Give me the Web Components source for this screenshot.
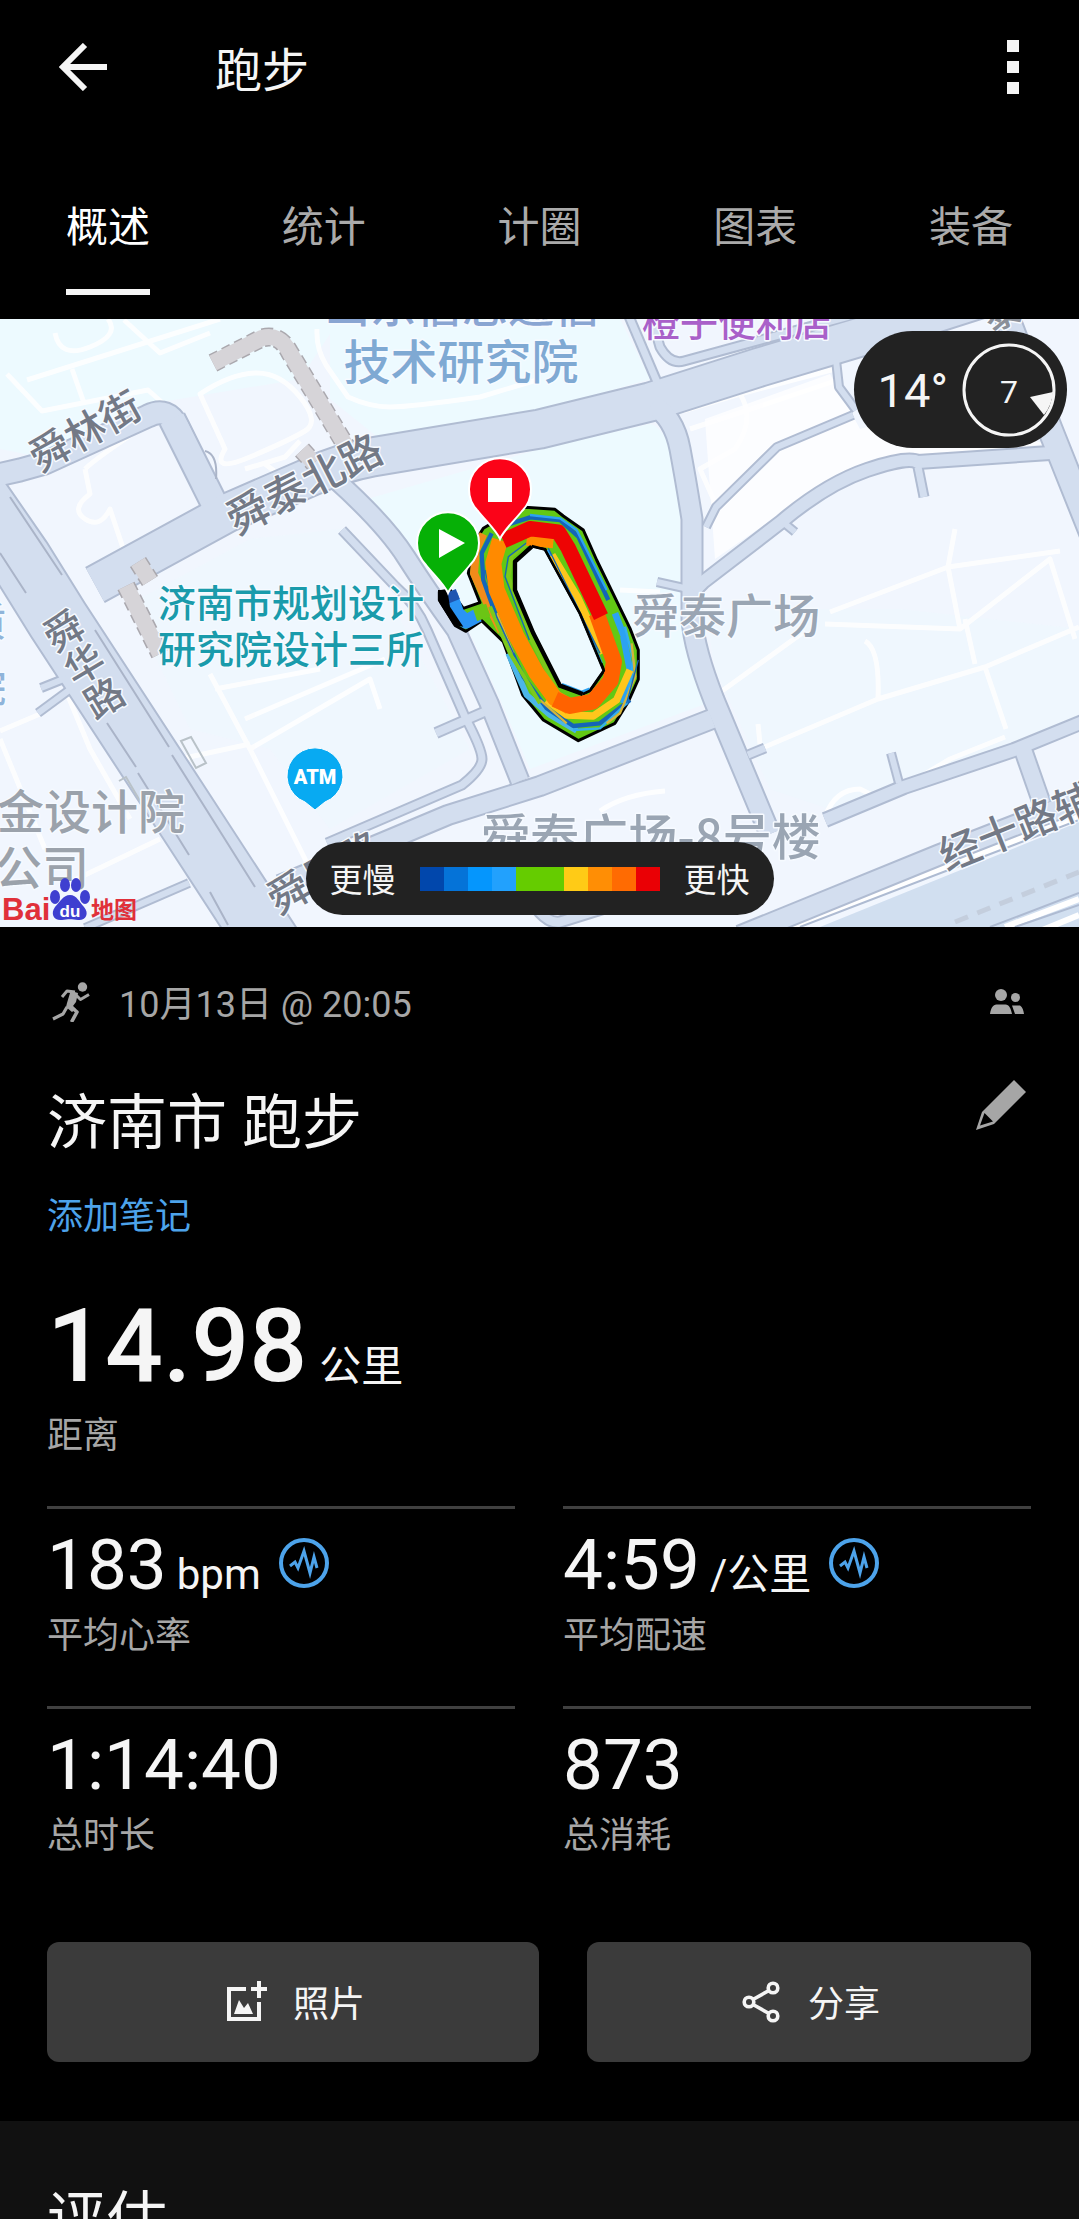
<!DOCTYPE html>
<html lang="zh-CN">
<head>
<meta charset="utf-8">
<meta name="viewport" content="width=device-width, initial-scale=1">
<title>跑步</title>
<style>
  html, body { margin: 0; height: 100%; background: #000; }
  body { font-family: Roboto, "Noto Sans CJK SC", sans-serif; color: #f5f5f5; overflow: hidden; }
</style>
</head>
<body>
<activity-page>
  <app-bar slot="bar">跑步</app-bar>
  <tab-bar slot="tabs">
    <tab-item active>概述</tab-item>
    <tab-item>统计</tab-item>
    <tab-item>计圈</tab-item>
    <tab-item>图表</tab-item>
    <tab-item>装备</tab-item>
  </tab-bar>
  <route-map slot="map">
    <weather-pill slot="top" wind="7">14°</weather-pill>
    <pace-legend slot="bottom"><span slot="slow">更慢</span><span slot="fast">更快</span></pace-legend>
  </route-map>
  <activity-summary slot="body">
    <span slot="date">10月13日 @ 20:05</span>
    <span slot="title">济南市 跑步</span>
    <span slot="note">添加笔记</span>
    <stat-cell slot="hero" large unit="公里" label="距离">14.98</stat-cell>
    <stat-cell unit="bpm" label="平均心率" chart>183</stat-cell>
    <stat-cell unit="/公里" label="平均配速" chart>4:59</stat-cell>
    <stat-cell label="总时长">1:14:40</stat-cell>
    <stat-cell label="总消耗">873</stat-cell>
    <action-button slot="photo" icon="photo">照片</action-button>
    <action-button slot="share" icon="share">分享</action-button>
  </activity-summary>
  <review-section slot="review">评估</review-section>
</activity-page>

<script>
const define = (name, render) => customElements.define(name, class extends HTMLElement {
  connectedCallback() {
    if (this.shadowRoot) return;
    this.attachShadow({ mode: 'open' }).innerHTML = render(this);
  }
});

const ICONS = {
  back: `<svg width="48" height="48" viewBox="0 0 48 48" fill="none" stroke="currentColor" stroke-width="6"><path d="M26 2 4 24l22 22M4 24h44"/></svg>`,
  more: `<svg width="12" height="54" viewBox="0 0 12 54" fill="currentColor"><path d="M0 0h12v12H0zM0 21h12v12H0zM0 42h12v12H0z"/></svg>`,
  run: `<svg width="40" height="40" viewBox="0 0 40 40" fill="none" stroke="currentColor" stroke-linejoin="round"><circle cx="30.500" cy="5" r="4.700" fill="currentColor" stroke="none"/><path fill="currentColor" stroke="none" d="M16 8l10 3-2 9-3 4 3 3-4 3-6-5 1-4 3-10z"/><path stroke-width="3" d="M23 10 15 9l-5 6M23 12l5.500 5.500L37 12.500"/><path stroke-width="3.600" d="M18 24l7 6-5.500 10"/><path stroke-width="3.200" d="M15 25l-4 7-10 5"/></svg>`,
  people: `<svg width="48" height="48" viewBox="0 0 48 48" fill="currentColor"><circle cx="18" cy="17" r="6"/><circle cx="32.500" cy="19.500" r="4.500"/><path d="M7 36c1-6 3-9.500 6.500-9.500h9c3.500 0 5.500 4 6.500 9.500zM29 27.500h8c2.500 1.500 3.500 5 4 8.500h-9z"/></svg>`,
  edit: `<svg width="60" height="60" viewBox="0 0 60 60"><path fill="currentColor" d="M43 5l12 12-32 32L5 55l6-18z"/><path fill="#000" d="M13.500 38l8.500 8.500-13 4z"/></svg>`,
  wave: `<svg width="50" height="50" viewBox="0 0 50 50" fill="none" stroke="#4da3ea" stroke-width="4"><circle cx="25" cy="25" r="23"/><path stroke-width="3" d="M11 28l5-4 3 6 6-17 6 22 4-16 3 11"/></svg>`,
  photo: `<svg width="42" height="42" viewBox="0 0 42 42" fill="none" stroke="currentColor" stroke-width="4"><path d="M21 8H4v30h30V21M34 0v17M26 8h16"/><path fill="currentColor" stroke="none" d="M9 33l5-14 5 8 4-5 5 11z"/></svg>`,
  share: `<svg width="40" height="42" viewBox="0 0 40 42" fill="none" stroke="currentColor" stroke-width="3.600"><circle cx="7" cy="21" r="4.800"/><circle cx="31" cy="7" r="4.800"/><circle cx="31" cy="35" r="4.800"/><path d="M11 18.500 27 9.500M11 23.500l16 9"/></svg>`
};

define('activity-page', () => `
<style>
  :host { display: flex; flex-direction: column; height: 100vh; overflow: hidden; }
  ::slotted(*) { flex: none; }
  ::slotted([slot="review"]) { flex: 1 1 0; }
</style>
<slot name="bar"></slot><slot name="tabs"></slot>
<slot name="map"></slot><slot name="body"></slot><slot name="review"></slot>`);

define('app-bar', () => `
<style>
  :host { display: block; }
  header { display: flex; align-items: center; height: 134px; padding: 0 60px 0 59px; }
  button { display: flex; border: 0; padding: 0; background: none; color: inherit; }
  h1 { flex: 1; margin: 0 0 0 108px; padding-top: 8px; font-size: 47px; line-height: 60px; font-weight: 400; }
</style>
<header>
  <button aria-label="返回">${ICONS.back}</button>
  <h1><slot></slot></h1>
  <button aria-label="更多">${ICONS.more}</button>
</header>`);

define('tab-bar', () => `
<style>
  :host { display: block; }
  nav { display: flex; }
  ::slotted(*) { flex: 1 1 0; }
</style>
<nav><slot></slot></nav>`);

define('tab-item', el => `
<style>
  :host { display: flex; justify-content: center; padding: 64px 0 24px; }
  a { font-size: 42px; line-height: 60px; padding-bottom: 31px; border-bottom: 6px solid transparent; color: #aaa; text-decoration: none; }
  :host([active]) a { color: #fff; border-color: #f5f5f5; }
</style>
<a href="#"${el.hasAttribute('active') ? ' aria-current="page"' : ''}><slot></slot></a>`);

/* Streets of the base map: [width, path] */
const STREETS = [
  [62, 'M-70 110 20 240 58 301 175 480 270 626'],
  [22, 'M-20 160 20 151 45 144 148 97Q168 87 178 108L222 200'],
  [26, 'M172 100 222 200'],
  [38, 'M95 266 227 194 310 158 Q340 144 372 138L540 110 650 83 760 48 867 16 980-20'],
  [18, 'M335 160 Q385 205 406 238T456 311L489 384 520 462'],
  [8, 'M342 211 396 268Q416 285 427 311L465 398Q482 430 482 440T462 466L327 524'],
  [9, 'M436 414 484 393'],
  [19, 'M280 566 386 522 448 496 540 467 712 400'],
  [20, 'M652 85 Q674 98 680 130T692 200V300Q694 330 714 381L770 515'],
  [13, 'M694 272 703 263 781 203 Q826 165 867 151T918 143L1050 134'],
  [24, 'M1000-20 1050 110 Q1066 150 1092 215'],
  [7, 'M706 208 716 188 777 128 853 96'],
  [7, 'M836 41 839 68 856 91'],
  [8, 'M628-5 657 63'],
  [8, 'M652 0 660 28Q670 46 684 42L849-3'],
  [20, 'M740 617 939 536 1021 504 1085 480'],
  [13, 'M825 501 904 468 1014 431 1085 402'],
  [17, 'M1021 425 1042 485'],
  [7, 'M891 434 899 464'],
  [8, 'M918 148 924 178'],
  [7, 'M784 204 795 213'],
  [8, 'M748 436 765 429'],
  [7, 'M657 263 684 269'],
  [7, 'M38 394 72 369'],
  [7, 'M41 369 66 359'],
  [7, 'M85 609 189 564'],
  [10, 'M520 560Q540 606 560 603L640 578']
];
const LANES = [
  'M7 55 42 92 148 71 165 86M27 61 220 0M124 1 160 34 210 14M72 50 84 84M55 14Q60 40 90 28T108 0',
  'M200 75Q230 55 255 54T300 78T305 112T250 138T225 130Z',
  'M317 10Q316 30 326 46L348 78Q370 88 390 88T480 78L540 60',
  'M245 150 285 138 300 122M265 145 285 160',
  'M85 150Q95 140 140 110M85 150 90 175Q70 190 85 200T110 190L125 235',
  'M0 412 40 395 66 372M0 420 45 530M66 372 90 430 130 500M60 568 160 520',
  'M210 355 250 430 320 570M180 440 250 425M250 430 370 360 380 390M215 370 320 350M245 400 385 340',
  'M683 92 740 75 835 50M690 110 745 92 835 62M740 75Q756 100 735 130L700 150 716 186',
  'M830 293 948 248 1060 232M948 248 955 210M948 248 960 310 825 305M960 310 1050 240 1075 320',
  'M722 372 805 312M760 430 878 380 985 348 1079 308M878 380Q880 330 865 322M985 348 1006 410M760 425 758 405M965 300 975 345',
  'M600 492Q625 475 665 472M825 498Q835 470 860 470L880 480M925 455 950 440 1005 418M620 271 660 273'
];
const NAMES = [
  /* x, y, size, colour, text, rotation */
  [461, 39, 47, '#7fa9d3', '技术研究院'],
  [462, -17, 46, '#89a5d2', '山东信息通信'],
  [737, 0, 38, '#a960c9', '橙子便利店'],
  [84, 110, 40, '#737986', '舜林街', -29],
  [303, 162, 42, '#737986', '舜泰北路', -27],
  [291, 281, 38, '#1a9bab', '济南市规划设计'],
  [291, 327, 38, '#1a9bab', '研究院设计三所'],
  [726, 293, 47, '#9aa5b3', '舜泰广场'],
  [651, 514, 49, '#9aa5b3', '舜泰广场-8号楼'],
  [91, 489, 47, '#9ba2ab', '金设计院'],
  [42, 545, 47, '#9ba2ab', '公司'],
  [1016, 505, 41, '#737986', '经十路辅', -22],
  [323, 551, 41, '#737986', '舜风路', -29],
  [1002, -10, 40, '#8b9099', '泰', -20],
  [-14, 300, 40, '#8fb4da', '质'],
  [-14, 366, 40, '#8fb4da', '院']
];

define('route-map', () => `
<style>
  :host { display: grid; height: 608px; background: #f1f6fe; overflow: hidden; }
  :host > * { grid-area: 1 / 1; min-width: 0; min-height: 0; }
  .base { width: 100%; height: 608px; }
  .names text { text-anchor: middle; dominant-baseline: central; paint-order: stroke; stroke: #f6faff; stroke-width: 3px; stroke-linejoin: round; font-family: "Noto Sans CJK SC", sans-serif; font-weight: 500; }
  .top, .bottom { display: flex; padding: 12px; z-index: 1; }
  .top { justify-content: flex-end; align-self: start; }
  .bottom { justify-content: center; align-self: end; }
</style>
<svg class="base" viewBox="0 0 1079 608" preserveAspectRatio="xMidYMid slice" role="img" aria-label="路线地图">
  <g fill="#edfaff">
    <path d="M0 0H340L300 60 150 85 50 140 0 130zM330 0H620L650 60 540 92 380 120 330 80z"/>
    <path d="M350 185 540 130 650 105Q672 110 680 180V300L705 385 530 450 500 380 450 270z"/>
    <path d="M130 285 250 220 340 210 400 300 470 430 330 510 270 430 190 410z" opacity=".4"/>
    <path d="M705 290H900L1079 310V400L830 490 770 470 715 350z" opacity=".4"/>
  </g>
  <path fill="#fcfdff" d="M705 100 830 55 860 110 930 90 1045 125 880 145 780 195 715 240z"/>
  <path fill="#d1dff0" d="M820 608 1079 503V608z"/>
  <g fill="none" stroke="#fff" stroke-width="6"><path d="M790 608 1079 497M1005 608 1079 580M1040 612 1079 596"/></g>
  <g fill="none" stroke="#aebbd2" stroke-width="2"><path d="M800 608 1079 501M990 608 1079 574M1015 608 1079 586"/></g>
  <path fill="none" stroke="#c4cedd" stroke-width="5" stroke-dasharray="14 10" d="M955 603 1079 553"/>
  <g fill="none" stroke="#fff" stroke-width="5" stroke-linejoin="round" opacity=".85">${LANES.map(d => `<path d="${d}"/>`).join('')}</g>
  <g fill="none" stroke="#b0bcd2" stroke-linejoin="round">${STREETS.map(([w, d]) => `<path stroke-width="${w + 3}" d="${d}"/>`).join('')}</g>
  <g fill="none" stroke="#d3deef" stroke-linejoin="round">${STREETS.map(([w, d]) => `<path stroke-width="${w - 1}" d="${d}"/>`).join('')}</g>
  <g fill="none" stroke="#aab4c8" stroke-width="2"><path d="M95 311 169 428M107 404 136 448M138 454 189 536M172 436 255 568M10 178 62 256M0 234 26 274M210 573 228 606M205 132Q218 135 216 160"/></g>
  <g fill="none" stroke-linejoin="round">
    <g stroke="#aaa8ae" stroke-width="19" stroke-dasharray="9 5"><path d="M213 44 262 19Q280 14 290 34L346 127M138 243 150 262M126 267 160 335M302 131 314 144"/></g>
    <g stroke="#d6d4d8" stroke-width="16"><path d="M213 44 262 19Q280 14 290 34L346 127M138 243 150 262M126 267 160 335M302 131 314 144"/></g>
  </g>
  <g fill="none" stroke="#b9c2c8" stroke-width="2"><path d="M181 422l10-4 15 26-10 5zM119 462l7-4 14 24"/></g>

  <g class="names">
    ${NAMES.map(([x, y, s, c, t, r]) => `<text x="${x}" y="${y}" font-size="${s}" fill="${c}"${r ? ` transform="rotate(${r} ${x} ${y})"` : ''}>${t}</text>`).join('')}
    <text x="84" y="345" font-size="39" fill="#737986" writing-mode="vertical-rl" transform="rotate(-31 84 345)">舜华路</text>
  </g>

  <path fill="#08aaf2" stroke="#fff" stroke-width="1" d="M315 491l-10-8a28 28 0 1 1 20 0z"/>
  <text x="315" y="465" font-size="20" font-weight="900" font-family="Roboto, sans-serif" fill="#fff" text-anchor="middle">ATM</text>

  <g transform="translate(400 121) scale(.3333)" fill="none" stroke-linejoin="round">
    <path fill="#62c814" stroke="#000" stroke-width="9" fill-rule="evenodd" d="M375 202 465 208 490 228 550 270 590 360 690 565 715 630V718L685 785 645 850 535 902 430 840 368 765 330 660 310 605 245 542 198 574 165 556 118 480 118 455 150 450 190 505 240 488 205 400 222 310 250 265 310 230zM345 365V450L400 580 480 737 548 762 570 752 612 692 540 520 435 328 395 318z"/>
    <path stroke="#4bb5e8" stroke-width="18" d="M325 640 380 765 450 825 530 872"/>
    <path stroke="#f28b1a" stroke-width="24" d="M250 282 228 330 222 400 262 490 305 575"/>
    <path stroke="#1465b8" stroke-width="13" d="M275 280 245 340 250 420 300 560 370 710 440 805 520 858 600 850 690 780M320 255 390 232 480 240 535 290 625 480"/>
    <path stroke="#2ca2f2" stroke-width="20" d="M645 520 680 610M670 590 692 700 670 790"/>
    <path stroke="#2ca2f2" stroke-width="12" d="M485 735 545 758 570 748"/>
    <path stroke="#2ca2f2" stroke-width="7" d="M390 225 480 235 530 270 620 450M443 330 520 470 605 670"/>
    <path stroke="#34aef0" stroke-width="7" d="M675 560 700 660 680 790 600 865 520 870"/>
    <path stroke="#ffc61c" stroke-width="22" d="M456 345 532 470 610 640M690 690 650 780 580 828 500 825 440 780"/>
    <path stroke="#d4b43c" stroke-width="7" d="M695 610 706 710 660 820 620 850M290 520 340 640M420 780 500 850"/>
    <path stroke="#7cc91c" stroke-width="12" d="M390 305 335 348 325 410 395 600 465 740M270 500 330 640 420 790"/>
    <path stroke="#1465b8" stroke-width="4" d="M380 308 325 350 315 410 388 600M255 390 290 530 345 650M715 660 680 790M445 325 600 640"/>
    <path stroke="#ff8a00" stroke-width="34" d="M460 308 380 300"/>
    <path stroke="#ff8a00" stroke-width="48" d="M300 300 280 370 290 450 350 590 410 700 465 775 510 800"/>
    <path stroke="#ff6200" stroke-width="48" d="M465 778 510 798 578 785 632 722 642 665 590 520"/>
    <path stroke="#ee0404" stroke-width="46" d="M310 302 390 266 475 276 505 325 603 530"/>
    <path stroke="#2a94f4" stroke-width="42" d="M152 465 172 520 198 545 235 525"/>
    <path stroke="#1f55b0" stroke-width="42" d="M148 455 160 485"/>
    <path stroke="#6bc515" stroke-width="40" d="M225 524 265 510"/>
    <path stroke="#000" stroke-width="13" d="M395 320 345 365V450L400 580 480 737 548 762"/>
    <path stroke="#000" stroke-width="7" d="M548 762 570 752 612 692 540 520 435 328 395 318"/>
    <path fill="#000" d="M114 450 142 450 150 500 190 560 160 555 116 485z"/>
  </g>

  <g stroke="#fff" stroke-width="2">
    <path fill="#fb0318" d="M500 220c-3-8-15-19-22-28a31 31 0 1 1 44 0c-7 9-19 20-22 28z"/>
    <path fill="#06b006" d="M448 274c-3-8-15-19-22-28a31 31 0 1 1 44 0c-7 9-19 20-22 28z"/>
  </g>
  <path fill="#fff" d="M488 159h24v24h-24zM439 210v29l26-15z"/>

  <g font-family="Liberation Sans, Noto Sans CJK SC, sans-serif" font-weight="700">
    <text x="2" y="601" font-size="31" fill="#e0303a">Bai</text>
    <text x="91" y="599" font-size="23" fill="#e0303a">地图</text>
    <g fill="#3e3fd0"><ellipse cx="55" cy="578" rx="5" ry="7"/><ellipse cx="65" cy="566" rx="5" ry="7"/><ellipse cx="76" cy="566" rx="5" ry="7"/><ellipse cx="85" cy="578" rx="5" ry="7"/><path d="M70 576c7 0 9 7 14 12 6 7 1 14-6 13-6-1-10-1-16 0-8 1-12-6-7-13 5-5 8-12 15-12z"/></g>
    <text x="70" y="598" font-size="17" fill="#fff" text-anchor="middle">du</text>
  </g>
</svg>
<div class="top"><slot name="top"></slot></div>
<div class="bottom"><slot name="bottom"></slot></div>`);

define('weather-pill', el => `
<style>
  :host { display: flex; align-items: center; gap: 14px; height: 117px; padding: 0 11px 0 24px; border-radius: 59px; background: #222; }
  .temp { font-size: 47px; padding-top: 2px; }
  .wind { display: grid; place-items: center; }
  .wind > * { grid-area: 1 / 1; }
  .speed { font-size: 32px; padding-top: 4px; }
</style>
<span class="temp"><slot></slot></span>
<span class="wind">
  <svg width="94" height="94" viewBox="0 0 94 94"><circle cx="47" cy="47" r="45" fill="none" stroke="#f5f5f5" stroke-width="3"/><path fill="#f5f5f5" d="M68 54l23-5q-1 13-9 23z"/></svg>
  <span class="speed">${el.getAttribute('wind')}</span>
</span>`);

define('pace-legend', () => `
<style>
  :host { display: flex; align-items: center; gap: 24px; height: 73px; padding: 0 24px; border-radius: 37px; background: #222; font-size: 33px; line-height: 48px; }
  ::slotted(span) { padding-top: 5px; }
  .scale { display: flex; }
  i { width: 24px; height: 24px; }
</style>
<slot name="slow"></slot>
<span class="scale">${['#0147ac', '#0573d8', '#0596fd', '#22a1fd', '#65cc00', '#65cc00', '#ffcb16', '#ff8e05', '#ff6b02', '#ea0005'].map(c => `<i style="background:${c}"></i>`).join('')}</span>
<slot name="fast"></slot>`);

define('activity-summary', () => `
<style>
  :host { display: block; padding: 48px 48px 59px 47px; }
  .row { display: flex; align-items: center; }
  .meta { height: 54px; color: #a6a6a6; font-size: 36px; line-height: 48px; }
  .meta .date { flex: 1; margin-left: 27px; padding-top: 5px; }
  .run { display: flex; width: 40px; padding-left: 5px; }
  .heading { margin-top: 46px; height: 98px; }
  h2 { flex: 1; margin: 0; font-size: 60px; line-height: 84px; font-weight: 400; }
  button { display: flex; align-self: flex-start; border: 0; padding: 0; background: none; color: #a6a6a6; }
  .meta button { align-self: center; }
  a { display: block; width: max-content; margin: 20px 0 49px; font-size: 36px; line-height: 48px; color: #4da3ea; text-decoration: none; }
  .grid { display: grid; grid-template-columns: 1fr 1fr; column-gap: 48px; margin: 46px 0 36px; }
  .actions { display: grid; grid-template-columns: 492fr 444fr; gap: 48px; }
</style>
<div class="row meta"><span class="run">${ICONS.run}</span><span class="date"><slot name="date"></slot></span><button aria-label="隐私">${ICONS.people}</button></div>
<div class="row heading"><h2><slot name="title"></slot></h2><button aria-label="编辑">${ICONS.edit}</button></div>
<a href="#"><slot name="note"></slot></a>
<slot name="hero"></slot>
<div class="grid"><slot></slot></div>
<div class="actions"><slot name="photo"></slot><slot name="share"></slot></div>`);

define('stat-cell', el => `
<style>
  :host { display: block; border-top: 3px solid #404040; padding: 14px 0 46px; }
  :host([large]) { border: 0; padding: 0; }
  .value { display: flex; align-items: baseline; gap: 10px; height: 84px; font-size: 71px; line-height: 84px; }
  :host([large]) .value { gap: 12px; height: 112px; font-size: 102px; line-height: 112px; font-weight: 500; }
  .unit { font-size: 42px; font-weight: 400; line-height: 48px; }
  .chart { display: flex; align-self: flex-start; margin: 15px 0 0 8px; }
  .label { margin-top: 5px; font-size: 36px; line-height: 48px; color: #a6a6a6; }
  :host([large]) .label { margin-top: 10px; }
</style>
<div class="value"><span><slot></slot></span>${el.getAttribute('unit') ? `<span class="unit">${el.getAttribute('unit')}</span>` : ''}${el.hasAttribute('chart') ? `<span class="chart">${ICONS.wave}</span>` : ''}</div>
<div class="label">${el.getAttribute('label')}</div>`);

define('action-button', el => `
<style>
  :host { display: block; }
  button { display: flex; align-items: center; justify-content: center; gap: 26px; width: 100%; height: 120px; border: 0; border-radius: 12px; padding: 0 0 0 4px; background: #3b3b3b; color: #f5f5f5; font: inherit; font-size: 36px; line-height: 48px; }
  span { padding-top: 5px; }
</style>
<button>${ICONS[el.getAttribute('icon')]}<span><slot></slot></span></button>`);

define('review-section', () => `
<style>
  :host { display: block; overflow: hidden; background: #111; padding: 58px 48px 0 47px; }
  h2 { margin: 0; font-size: 60px; line-height: 84px; font-weight: 400; }
</style>
<h2><slot></slot></h2>`);
</script>
</body>
</html>
